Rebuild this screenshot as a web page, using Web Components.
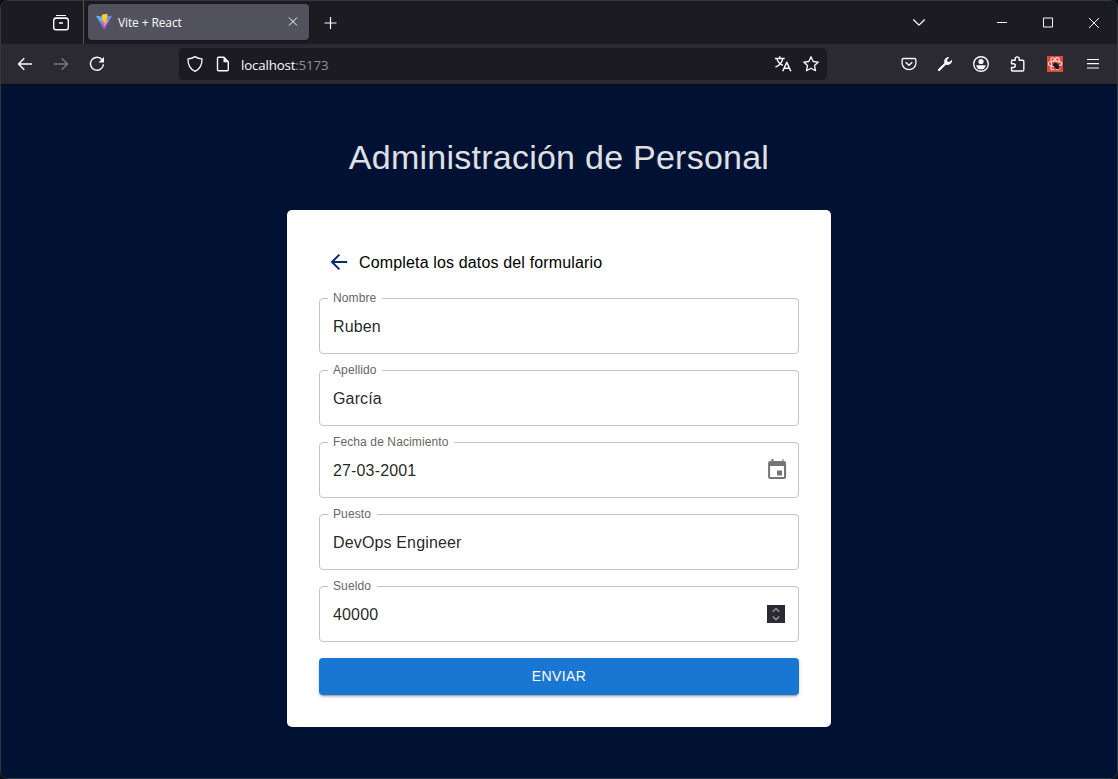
<!DOCTYPE html>
<html lang="es">
<head>
<meta charset="utf-8">
<title>Vite + React</title>
<style>
html, body { margin: 0; height: 100%; overflow: hidden; background: #0a1018; }
</style>
</head>
<body>
<browser-window>
  <tab-strip slot="tabs"></tab-strip>
  <nav-bar slot="nav"></nav-bar>
  <personal-page></personal-page>
</browser-window>
<script>
const define = (name, html, fill) => customElements.define(name, class extends HTMLElement {
  constructor() {
    super();
    this.attachShadow({ mode: 'open' }).innerHTML = html;
  }
  connectedCallback() { if (fill) fill(this, this.shadowRoot); }
});

const ICONS = {
  archive: '<path d="M5 2.500h10" stroke-width="1.2"/><path d="M3.5 5h13" stroke-width="1.2"/><rect x="2.7" y="5.3" width="14.6" height="11.4" rx="2.3" stroke-width="1.4"/><path d="M8 10h4"/>',
  tabclose: '<path d="M6 5.500l8 8M14 5.500l-8 8" stroke-width="1"/>',
  plus: '<path d="M10.5 4v12M4.500 10h12" stroke-width="1.2"/>',
  chevron: '<path d="M4.300 6.500L10 12.100 15.700 6.500" stroke-width="1.3"/>',
  min: '<path d="M5 9.500h10" stroke-width="1"/>',
  max: '<rect x="5.500" y="5" width="9" height="9" stroke-width="1"/>',
  close: '<path d="M5 5l10 10M15 5L5 15" stroke-width="1"/>',
  back: '<path d="M17 10H3.800M9.300 4.200L3.500 10l5.800 5.800" stroke-width="1.500"/>',
  forward: '<path d="M3 10h13.200M10.700 4.200l5.800 5.800-5.800 5.800" stroke-width="1.500"/>',
  reload: '<path d="M15.100 5.700A6.500 6.500 0 1 0 16.500 10.200" stroke-width="1.400"/><path d="M17 3v5.500h-5.500z" fill="currentColor" stroke="none"/>',
  shield: '<path d="M10 2.600c2.200 1.500 4.600 2.200 7 2.300.2 5.200-2 9.900-7 12.500C5 14.800 2.800 10.100 3 4.900c2.400-.1 4.800-.8 7-2.300z" stroke-width="1.300"/>',
  page: '<path d="M5.700 3.300h5.200l4.400 4.400v7.800a1.200 1.200 0 0 1-1.200 1.200H5.700a1.200 1.200 0 0 1-1.200-1.200V4.500a1.200 1.200 0 0 1 1.200-1.200z" stroke-width="1.400"/><path d="M10.500 3v5.200h5.200z" fill="currentColor" stroke="none"/>',
  translate: '<path d="M2 4.500h9.700M6.800 2.200v2.300M4 4.800c.8 3.200 3.500 5.500 6 6.500M9.700 4.800c-.7 3.200-3.500 6.800-7.200 8.200" stroke-width="1.400"/><path d="M9.700 17.300L13.800 8.300l4 9M11.200 14.300h5.200" stroke-width="1.500"/>',
  star: '<path d="M10 2.800l2.200 4.700 5.100.6-3.800 3.500 1 5.100-4.500-2.500-4.500 2.500 1-5.100-3.800-3.500 5.100-.6z" stroke-width="1.300"/>',
  pocket: '<path d="M4.500 4.500h11a1.400 1.400 0 0 1 1.400 1.400v3.200a6.900 6.500 0 0 1-13.800 0V5.900a1.400 1.400 0 0 1 1.400-1.400z" stroke-width="1.300"/><path d="M6.700 8.300L10 11.300l3.300-3" stroke-width="1.500"/>',
  wrench: '<path d="M4 16l7-7" stroke-width="2.400" stroke-linecap="round"/><path d="M14.300 3a4.500 4.500 0 0 0-5 5.700l2 2a4.500 4.500 0 0 0 5.800-5l-2.900 2.400-1.700-.4-.4-1.700z" fill="currentColor" stroke="none"/>',
  account: '<circle cx="10" cy="10" r="7.300" stroke-width="1.400"/><circle cx="10" cy="7.500" r="2.600" fill="currentColor" stroke="none"/><path d="M5.300 11.300h9.400a4.700 4 0 0 1-9.400 0z" fill="currentColor" stroke="none"/>',
  puzzle: '<path d="M4.200 6.300h4V4.900a2 2 0 0 1 4 0v1.400h3.500a1.100 1.100 0 0 1 1.100 1.100v8.500a1.100 1.100 0 0 1-1.100 1.100H5.600a1.100 1.100 0 0 1-1.100-1.100v-2.400h1.900a1.900 1.900 0 0 0 0-3.800H4.500V7" stroke-width="1.400"/>',
  react: '<rect x="2" y="2" width="16" height="16" fill="#db4938" stroke="none"/><g stroke="#f6dcd6" stroke-width="1.200"><ellipse cx="10" cy="9.700" rx="6.700" ry="2.700"/><ellipse cx="10" cy="9.700" rx="6.700" ry="2.700" transform="rotate(60 10 9.700)"/><ellipse cx="10" cy="9.700" rx="6.700" ry="2.700" transform="rotate(-60 10 9.700)"/></g><path d="M7 8h6.500v4H7z" fill="#db4938" stroke="none"/><ellipse cx="11.300" cy="12" rx="2.300" ry="3.700" fill="#24191a" stroke="none" transform="rotate(-40 11.300 12)"/><path d="M8 11l6-1M9 14.500l6.500-2M11 9l2.800 6" stroke="#24191a" stroke-width=".8"/>',
  menu: '<path d="M4 5.500h12M4 9.700h12M4 14h12" stroke-width="1.200"/>',
  vite: '<defs><linearGradient id="a" x1="0" y1="0" x2=".6" y2="1"><stop stop-color="#41d1ff"/><stop offset="1" stop-color="#bd34fe"/></linearGradient><linearGradient id="b" x1="0" y1="0" x2="0" y2="1"><stop stop-color="#ffdd35"/><stop offset="1" stop-color="#ffa800"/></linearGradient></defs><path d="M2 3.700l8 1.300 8-1.300L10.300 17.800z" fill="url(#a)" stroke="none"/><path d="M13.400 1.800L8 2.800 7.500 9l2.100-.4-.5 2.500 1.600-.4-1 4.500L14.200 8l-1.900.4.9-2.800z" fill="url(#b)" stroke="none"/>',
  arrow: '<path d="M18.200 10H3.700M10.400 2.600L3 10l7.400 7.400" stroke-width="2" stroke-linejoin="miter"/>',
  event: '<path d="M15 10.500h-5v5h5z" fill="currentColor" stroke="none"/><path d="M15.500-1v2H6.500v-2h-2v2H3.100a2 2 0 0 0-2 2v14a2 2 0 0 0 2 2h14a2 2 0 0 0 2-2v-14a2 2 0 0 0-2-2h-.6v-2zM17 17H3.100V6H17z" fill="currentColor" stroke="none"/>',
  spin: '<rect x="1" y="1" width="18" height="18" fill="#2b2a33" stroke="none"/><path d="M6.600 7.700L10 4.600l3.400 3.100M6.600 12.500L10 15.600l3.400-3.100" stroke="#8f8f9d" stroke-width="1.500"/>'
};

define('ui-icon', `<style>
:host { display: flex; align-items: center; justify-content: center; flex: none; width: var(--slot-width, 36px); }
svg { display: block; width: 20px; height: 20px; overflow: visible; fill: none; stroke: currentColor; stroke-width: 1.5; stroke-linejoin: round; }
</style><svg viewBox="0 0 20 20"></svg>`, (host, root) => {
  root.querySelector('svg').innerHTML = ICONS[host.getAttribute('name')];
});

define('tab-strip', `<style>
:host { display: flex; height: 43px; align-items: center; background: #1c1b22; color: #fbfbfe; }
.view { margin-left: 42px; }
.divider { width: 1px; height: 43px; margin-left: 4px; background: #55545e; }
.tab { display: flex; align-items: center; box-sizing: border-box; width: 221px; height: 36px; margin: 0 3px 1px 4px; padding: 0 6px; background: #52525e; border-radius: 4px; box-shadow: 0 0 3px rgba(0,0,0,.5); font: 12px "Open Sans", "Noto Sans", sans-serif; }
.tab span { flex: 1; margin-left: 4px; padding-top: 1px; letter-spacing: -.12px; }
.grow { flex: 1; }
.win { --slot-width: 46px; }
.small { --slot-width: 20px; }
</style>
<ui-icon class="view" name="archive"></ui-icon><div class="divider"></div>
<div class="tab"><ui-icon class="small" name="vite"></ui-icon><span>Vite + React</span><ui-icon class="small" name="tabclose"></ui-icon></div>
<ui-icon name="plus"></ui-icon><div class="grow"></div>
<ui-icon name="chevron" style="margin-right:42px"></ui-icon>
<ui-icon class="win" name="min"></ui-icon><ui-icon class="win" name="max"></ui-icon><ui-icon class="win" name="close"></ui-icon>`);

define('nav-bar', `<style>
:host { display: flex; box-sizing: border-box; height: 41px; padding: 0 6px; align-items: center; background: #2b2a33; color: #fbfbfe; border-bottom: 1px solid #0c0c0d; }
.url { --slot-width: 28px; display: flex; align-items: center; box-sizing: border-box; width: 648px; height: 32px; margin: 0 64px; padding: 0 2px; background: #1c1b22; border-radius: 4px; font: 13.3px "Open Sans", "Noto Sans", sans-serif; }
.url p { flex: 1; margin: 0 0 0 4px; letter-spacing: -.16px; padding-top: 1px; }
.port { color: #8f8f96; }
.off { color: #77767e; }
</style>
<ui-icon name="back"></ui-icon><ui-icon class="off" name="forward"></ui-icon><ui-icon name="reload"></ui-icon>
<div class="url"><ui-icon name="shield"></ui-icon><ui-icon name="page"></ui-icon><p>localhost<span class="port">:5173</span></p><ui-icon name="translate"></ui-icon><ui-icon name="star"></ui-icon></div>
<ui-icon name="pocket"></ui-icon><ui-icon name="wrench"></ui-icon><ui-icon name="account"></ui-icon><ui-icon name="puzzle"></ui-icon>
<ui-icon name="react" style="margin:0 2px"></ui-icon><ui-icon name="menu"></ui-icon>`);

define('browser-window', `<style>
:host { display: flex; flex-direction: column; box-sizing: border-box; width: 1118px; height: 779px; border: 1px solid #30383d; border-radius: 8px; overflow: hidden; background: #001134; }
</style><slot name="tabs"></slot><slot name="nav"></slot><slot></slot>`);

define('text-field', `<style>
:host { display: flex; position: relative; align-items: center; box-sizing: border-box; height: 56px; padding: 0 12px 0 13px; border: 1px solid #c4c4c4; border-radius: 4px; color: rgba(0,0,0,.87); --slot-width: 20px; }
label { position: absolute; top: -8px; left: 8px; padding: 0 5.5px 0 5px; background: #fff; color: #666; font-size: 12px; line-height: 14px; letter-spacing: .11px; }
.value { flex: 1; font-size: 16px; line-height: 23px; letter-spacing: .15px; }
::slotted(ui-icon) { color: #757575; }
</style><label></label><div class="value"></div><slot></slot>`, (host, root) => {
  root.querySelector('label').textContent = host.getAttribute('label');
  root.querySelector('.value').textContent = host.getAttribute('value');
});

define('submit-button', `<style>
:host { display: block; }
button { display: block; width: 100%; height: 37px; padding: 0 0 2px; border: 0; border-radius: 4px; background: #1976d2; color: #fff; font: 14px/24px "Liberation Sans", Arial, sans-serif; letter-spacing: .4px; text-transform: uppercase; box-shadow: 0 3px 1px -2px rgba(0,0,0,.2), 0 2px 2px rgba(0,0,0,.14), 0 1px 5px rgba(0,0,0,.12); }
</style><button type="button"><slot></slot></button>`);

define('personal-page', `<style>
:host { display: flex; flex: 1; flex-direction: column; align-items: center; background: #001134; font-family: "Liberation Sans", Arial, sans-serif; }
h1 { margin: 51px 0 0; height: 74px; font-weight: 400; font-size: 34px; line-height: 42px; letter-spacing: .25px; color: #dfe0e3; white-space: nowrap; }
main { display: flex; flex-direction: column; gap: 16px; box-sizing: border-box; width: 544px; height: 517px; padding: 32px; background: #fff; border-radius: 5px; }
header { display: flex; align-items: center; height: 40px; color: #000; font-size: 16px; letter-spacing: .15px; --slot-width: 40px; }
header span { padding-top: 2px; }
header ui-icon { color: #0b2a70; }
</style>
<h1>Administración de Personal</h1>
<main>
<header><ui-icon name="arrow"></ui-icon><span>Completa los datos del formulario</span></header>
<text-field label="Nombre" value="Ruben"></text-field>
<text-field label="Apellido" value="García"></text-field>
<text-field label="Fecha de Nacimiento" value="27-03-2001"><ui-icon name="event" style="width:20px;margin-right:-1px"></ui-icon></text-field>
<text-field label="Puesto" value="DevOps Engineer"></text-field>
<text-field label="Sueldo" value="40000"><ui-icon name="spin"></ui-icon></text-field>
<submit-button>Enviar</submit-button>
</main>`);
</script>
</body>
</html>
